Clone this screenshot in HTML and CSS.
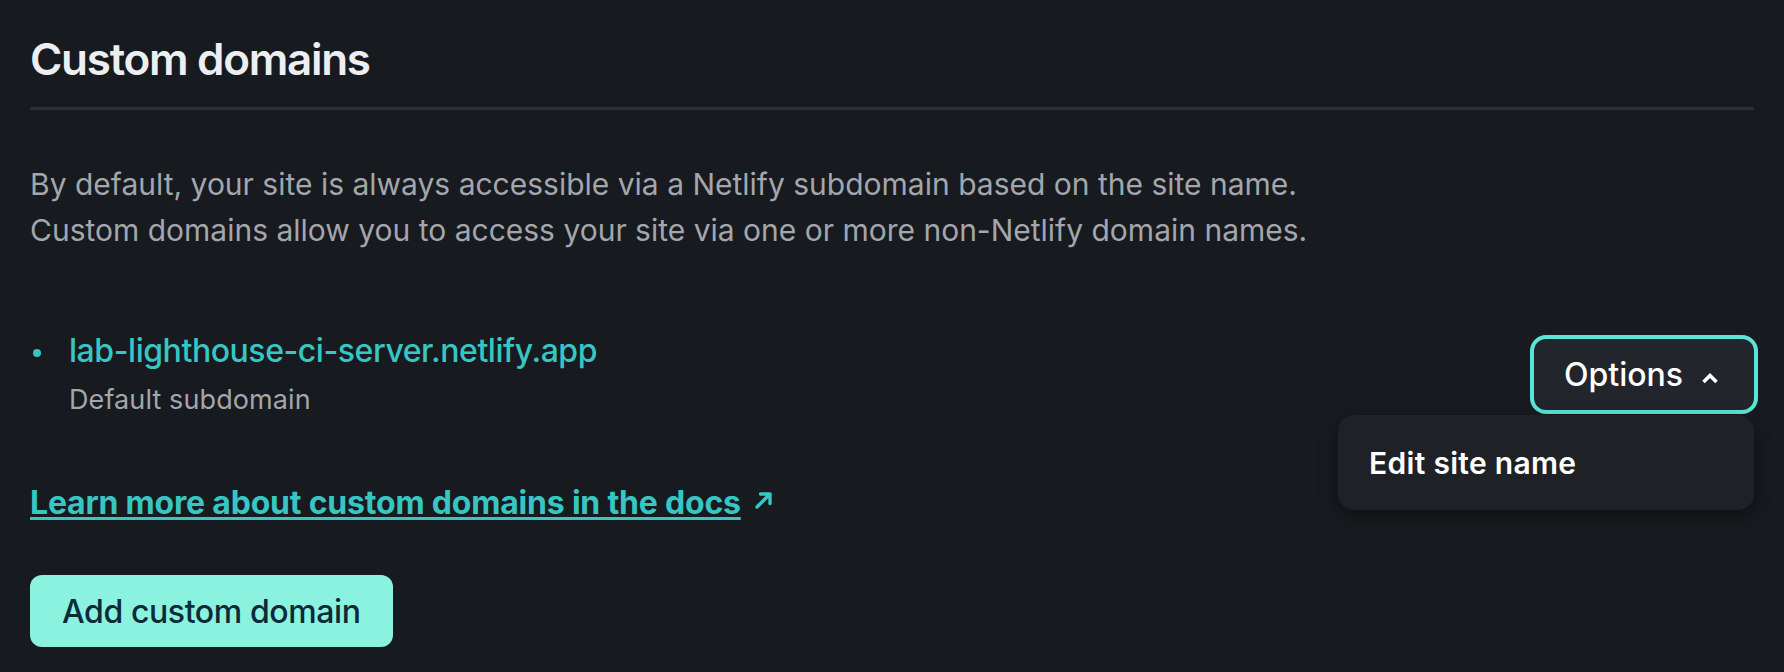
FILE: index.html
```html
<!DOCTYPE html>
<html lang="en">
<head>
<meta charset="utf-8">
<title>Custom domains</title>
<link rel="stylesheet" href="styles.css">
</head>
<body>
<section class="panel">
  <h1 class="panel-title">Custom domains</h1>
  <p class="panel-intro">By default, your site is always accessible via a Netlify subdomain based on the site name.<br>Custom domains allow you to access your site via one or more non-Netlify domain names.</p>

  <ul class="domain-list">
    <li class="domain-item">
      <span class="domain-dot"></span>
      <div class="domain-info">
        <a class="domain-name" href="#">lab-lighthouse-ci-server.netlify.app</a>
        <div class="domain-meta">Default subdomain</div>
      </div>
      <div class="options">
        <button class="options-btn" type="button">
          <span>Options</span>
          <svg class="chev" width="24" height="24" viewBox="0 0 24 24" aria-hidden="true"><path d="M5.5 19 L12 12.5 L18.5 19" fill="none" stroke="#ffffff" stroke-width="3.6" stroke-linejoin="miter"/></svg>
        </button>
        <div class="options-menu">
          <div class="options-item">Edit site name</div>
        </div>
      </div>
    </li>
  </ul>

  <div class="docs-row">
    <a class="docs-link" href="#">Learn more about custom domains in the docs</a>
    <svg class="ext" width="22" height="22" viewBox="0 0 22 22" aria-hidden="true"><path d="M4 18 L17 5 M7.5 5 H17 V14.5" fill="none" stroke="#36c6c3" stroke-width="3.4" stroke-linecap="round" stroke-linejoin="round"/></svg>
  </div>

  <button class="primary-btn" type="button">Add custom domain</button>
</section>
</body>
</html>
```

FILE: styles.css
```css
html, body {
  margin: 0;
  padding: 0;
}
body {
  background: #171a1e;
  font-family: Inter, "Noto Sans", sans-serif;
  color: #e9ebee;
  height: 672px;
  overflow: hidden;
}
.panel {
  padding: 33px 30px 0 30px;
}
.panel-title {
  margin: 0;
  font-size: 44px;
  line-height: 52px;
  font-weight: 600;
  color: #eceef1;
  padding-bottom: 22px;
  border-bottom: 3px solid #2c3036;
  letter-spacing: -1.3px;
}
.panel-intro {
  margin: 51px 0 0 0;
  font-size: 30px;
  line-height: 46px;
  color: #a3a6ac;
}
.domain-list {
  list-style: none;
  margin: 78px 0 0 0;
  padding: 0;
}
.domain-item {
  display: flex;
  align-items: center;
}
.domain-dot {
  width: 8px;
  height: 8px;
  border-radius: 50%;
  background: #36c6c3;
  margin-left: 3px;
  margin-right: 28px;
  align-self: flex-start;
  margin-top: 18px;
}
.domain-info {
  flex: 1;
}
.domain-name {
  display: block;
  font-size: 32px;
  line-height: 40px;
  font-weight: 500;
  color: #36c6c3;
  text-decoration: none;
  letter-spacing: -0.45px;
}
.domain-meta {
  margin-top: 11px;
  font-size: 27px;
  line-height: 36px;
  color: #a3a6ac;
  letter-spacing: 0.1px;
}
.options {
  position: relative;
}
.options-btn {
  display: flex;
  align-items: center;
  height: 71px;
  padding: 0 32px 0 30px;
  background: #22252b;
  border: 0;
  border-radius: 12px;
  box-shadow: 0 0 0 4px #5ae5d8;
  font-family: Inter, "Noto Sans", sans-serif;
  font-size: 32px;
  font-weight: 500;
  color: #ffffff;
  cursor: pointer;
}
.chev {
  margin-left: 15px;
}
.options-menu {
  position: absolute;
  top: calc(100% + 5px);
  right: 0;
  width: 416px;
  height: 95px;
  box-sizing: border-box;
  padding: 0 31px;
  display: flex;
  align-items: center;
  background: #1e2126;
  border-radius: 16px;
  box-shadow: 0 6px 18px rgba(0, 0, 0, 0.35);
  z-index: 2;
}
.options-item {
  font-size: 30px;
  font-weight: 600;
  color: #ffffff;
  letter-spacing: 0.3px;
}
.docs-row {
  display: flex;
  align-items: center;
  margin-top: 65px;
  height: 40px;
}
.docs-link {
  font-size: 32px;
  line-height: 40px;
  font-weight: 700;
  color: #36c6c3;
  text-decoration: underline;
  text-decoration-thickness: 3px;
  text-underline-offset: 3px;
  letter-spacing: -0.2px;
}
.ext {
  margin-left: 12px;
  margin-top: -6px;
}
.primary-btn {
  display: block;
  margin-top: 52px;
  height: 72px;
  padding: 0 32px;
  border: 0;
  border-radius: 12px;
  background: #8af2de;
  color: #0c2a37;
  font-family: Inter, "Noto Sans", sans-serif;
  font-size: 32px;
  font-weight: 500;
  letter-spacing: -0.4px;
  cursor: pointer;
}
```
